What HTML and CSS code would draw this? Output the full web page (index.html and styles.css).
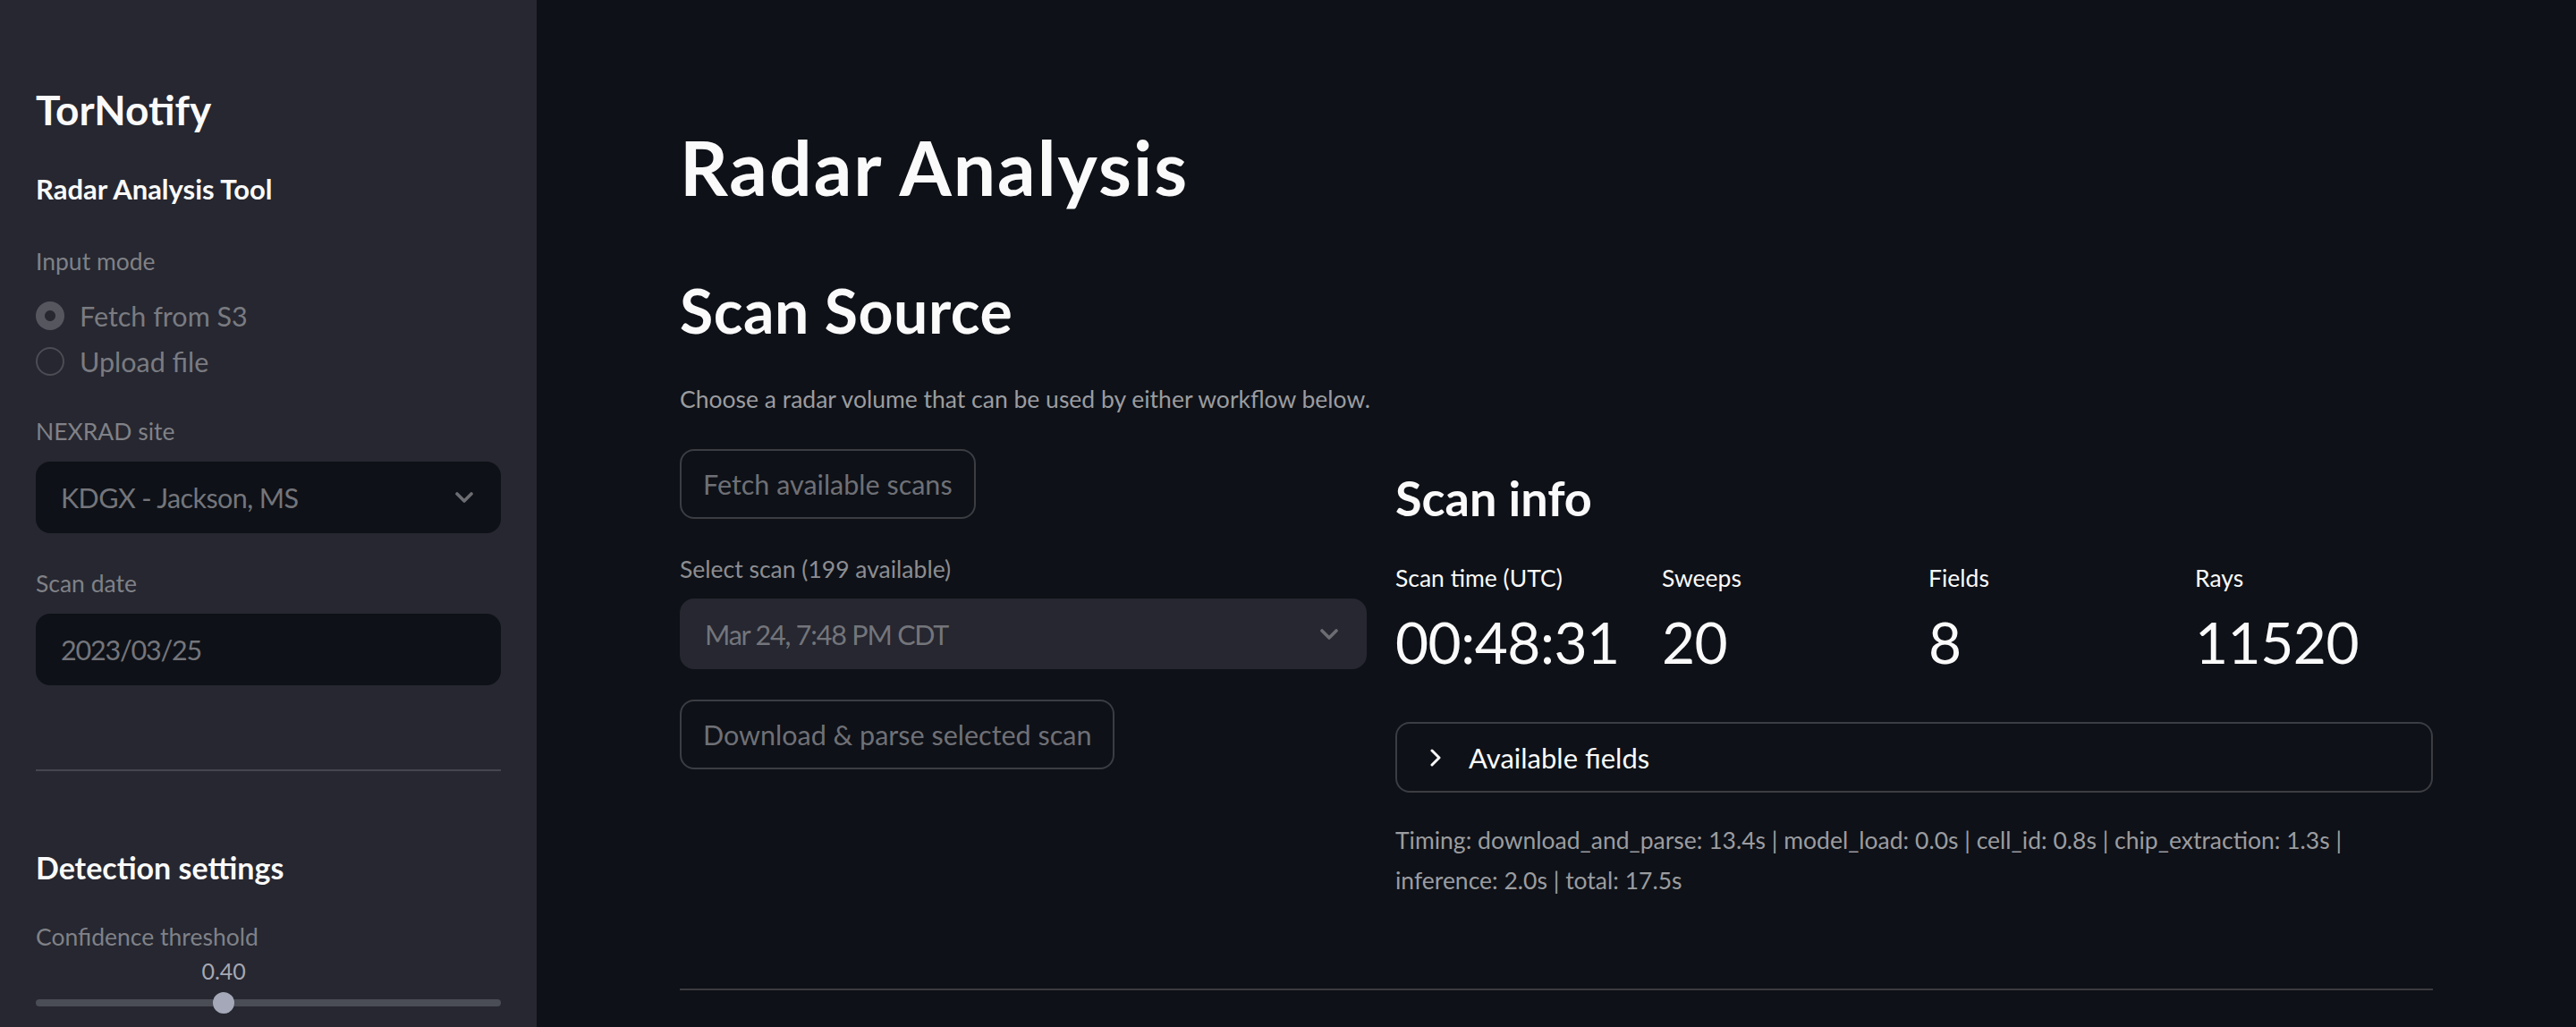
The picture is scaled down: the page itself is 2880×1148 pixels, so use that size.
FILE: index.html
```html
<!DOCTYPE html>
<html lang="en">
<head>
<meta charset="utf-8">
<title>TorNotify – Radar Analysis</title>
<link rel="stylesheet" href="styles.css">
</head>
<body>
<div class="app">
  <aside class="sidebar">
    <h1 class="sb-title">TorNotify</h1>
    <p class="sb-sub">Radar Analysis Tool</p>

    <div class="label sb-first-label">Input mode</div>
    <div class="radio-group">
      <div class="radio"><span class="radio-dot checked"></span><span>Fetch from S3</span></div>
      <div class="radio"><span class="radio-dot"></span><span>Upload file</span></div>
    </div>

    <div class="label sb-label">NEXRAD site</div>
    <div class="select select-dark">
      <span class="site-value">KDGX - Jackson, MS</span>
      <svg class="chev" width="20" height="12" viewBox="0 0 20 12"><path d="M2 2 L10 10 L18 2" fill="none" stroke="currentColor" stroke-width="3.6" stroke-linecap="round" stroke-linejoin="round"/></svg>
    </div>

    <div class="label sb-label2">Scan date</div>
    <div class="input select-dark"><span class="num-value">2023/03/25</span></div>

    <hr class="sb-hr">

    <h3 class="sb-h3">Detection settings</h3>
    <div class="label sb-conf">Confidence threshold</div>
    <div class="slider">
      <div class="slider-track"></div>
      <span class="slider-value" style="left:40.4%">0.40</span>
      <span class="slider-thumb" style="left:40.4%"></span>
    </div>
  </aside>

  <main class="main">
    <h1 class="title">Radar Analysis</h1>
    <h2 class="h2">Scan Source</h2>
    <p class="caption intro">Choose a radar volume that can be used by either workflow below.</p>

    <div class="columns">
      <div class="col-left">
        <button class="btn">Fetch available scans</button>
        <div class="label main-label">Select scan (199 available)</div>
        <div class="select select-main">
          <span class="num-value">Mar 24, 7:48 PM CDT</span>
          <svg class="chev" width="20" height="12" viewBox="0 0 20 12"><path d="M2 2 L10 10 L18 2" fill="none" stroke="currentColor" stroke-width="3.6" stroke-linecap="round" stroke-linejoin="round"/></svg>
        </div>
        <button class="btn btn2">Download &amp; parse selected scan</button>
      </div>

      <div class="col-right">
        <h3 class="h3">Scan info</h3>
        <div class="metrics">
          <div class="metric"><div class="metric-label">Scan time (UTC)</div><div class="metric-value">00:48:31</div></div>
          <div class="metric"><div class="metric-label">Sweeps</div><div class="metric-value">20</div></div>
          <div class="metric"><div class="metric-label">Fields</div><div class="metric-value">8</div></div>
          <div class="metric"><div class="metric-label">Rays</div><div class="metric-value">11520</div></div>
        </div>
        <div class="expander">
          <svg class="exp-chev" width="14" height="20" viewBox="0 0 14 20"><path d="M3 2 L11 10 L3 18" fill="none" stroke="currentColor" stroke-width="3" stroke-linecap="round" stroke-linejoin="round"/></svg>
          <span>Available fields</span>
        </div>
        <p class="caption timing">Timing: download_and_parse: 13.4s | model_load: 0.0s | cell_id: 0.8s | chip_extraction: 1.3s | inference: 2.0s | total: 17.5s</p>
      </div>
    </div>

    <hr class="main-hr">
  </main>
</div>
</body>
</html>
```

FILE: styles.css
```css
* { box-sizing: border-box; }

html, body {
  margin: 0;
  padding: 0;
}

body {
  background: #0e1117;
  color: #fafafa;
  font-family: "Source Sans Pro", Lato, "Noto Sans", sans-serif;
  overflow: hidden;
}

.app {
  display: flex;
  width: 2880px;
  height: 1148px;
}

/* ---------- Sidebar ---------- */
.sidebar {
  width: 600px;
  flex: none;
  background: #262730;
  padding: 93px 40px 0;
}

.sb-title {
  margin: 0;
  font-size: 46px;
  line-height: 60px;
  font-weight: 700;
}

.sb-sub {
  margin: 38px 0 0;
  font-size: 31px;
  line-height: 40px;
  font-weight: 700;
}

.label {
  font-size: 26.5px;
  line-height: 40px;
  color: #808187;
}

.sb-first-label { margin-top: 41px; }

.radio-group {
  margin-top: 15px;
  display: flex;
  flex-direction: column;
}

.radio {
  display: flex;
  align-items: center;
  gap: 17px;
  height: 51px;
  font-size: 30.5px;
  color: #7a7b81;
}

.radio-dot {
  width: 32px;
  height: 32px;
  flex: none;
  border-radius: 50%;
  border: 2px solid #4b4c54;
}

.radio-dot.checked {
  border: none;
  background: radial-gradient(circle, #272830 0 5.5px, #55565e 6.5px);
}

.sb-label { margin-top: 33px; }
.sb-label2 { margin-top: 36px; }

.select {
  display: flex;
  align-items: center;
  justify-content: space-between;
  height: 80px;
  border-radius: 16px;
  padding: 0 31px 0 28px;
  font-size: 30.5px;
}

.select-dark {
  margin-top: 14px;
  background: #0e1117;
  color: #74757b;
}

.site-value { letter-spacing: -0.6px; }
.num-value { letter-spacing: -1.2px; }

.chev { flex: none; color: #6c6d73; }

.input {
  display: flex;
  align-items: center;
  height: 80px;
  border-radius: 16px;
  padding: 0 28px;
  font-size: 30.5px;
}

.sb-hr {
  margin: 94px 0 0;
  border: none;
  height: 2px;
  background: #45464f;
}

.sb-h3 {
  margin: 84px 0 0;
  font-size: 34px;
  line-height: 48px;
  font-weight: 700;
}

.sb-conf { margin-top: 33px; }

.slider {
  position: relative;
  height: 70px;
  padding-top: 50px;
}

.slider-track {
  height: 8px;
  border-radius: 4px;
  background: #4a4c56;
}

.slider-thumb {
  position: absolute;
  top: 42px;
  width: 24px;
  height: 24px;
  border-radius: 50%;
  background: #a5a8b8;
  transform: translateX(-50%);
}

.slider-value {
  position: absolute;
  top: 1px;
  font-size: 25px;
  line-height: 34px;
  color: #a6a8b4;
  transform: translateX(-50%);
}

/* ---------- Main ---------- */
.main {
  flex: 1;
  min-width: 0;
  padding: 137px 160px 0;
}

.title {
  margin: 0;
  font-size: 84px;
  line-height: 100px;
  font-weight: 700;
  letter-spacing: 2px;
}

.h2 {
  margin: 70px 0 0;
  font-size: 68px;
  line-height: 80px;
  font-weight: 700;
  letter-spacing: 0.5px;
}

.caption {
  font-size: 26.5px;
  color: #9b9ca0;
}

.intro {
  margin: 39px 0 0;
  line-height: 40px;
}

.columns {
  margin-top: 36px;
  display: grid;
  grid-template-columns: 768px 1fr;
  gap: 32px;
  align-items: start;
}

.col-left {
  display: flex;
  flex-direction: column;
  align-items: flex-start;
}

.btn {
  height: 78px;
  padding: 0 24px;
  border: 2px solid #3b3d43;
  border-radius: 16px;
  background: transparent;
  color: #6f7076;
  font-family: inherit;
  font-size: 30.5px;
}

.main-label {
  margin-top: 36px;
  color: #8c8d92;
}

.select-main {
  align-self: stretch;
  margin-top: 13px;
  height: 79px;
  padding: 0 32px 0 28px;
  background: #262730;
  color: #74757b;
}

.btn2 { margin-top: 34px; }

.h3 {
  margin: 23px 0 0;
  font-size: 54px;
  line-height: 64px;
  font-weight: 700;
}

.metrics {
  margin-top: 37px;
  display: grid;
  grid-template-columns: repeat(4, 1fr);
  gap: 32px;
}

.metric-label {
  font-size: 26.5px;
  line-height: 40px;
  color: #fafafa;
}

.metric-value {
  margin-top: 12px;
  font-size: 64px;
  line-height: 80px;
  letter-spacing: -0.5px;
}

.expander {
  margin-top: 49px;
  height: 79px;
  border: 2px solid #3b3d43;
  border-radius: 16px;
  display: flex;
  align-items: center;
  gap: 30px;
  padding-left: 36px;
  font-size: 31px;
}

.exp-chev { flex: none; color: #fafafa; }

.timing {
  margin: 31px 0 0;
  line-height: 45px;
}

.main-hr {
  margin: 98px 0 0;
  border: none;
  height: 2px;
  background: #3a3b40;
}
```
